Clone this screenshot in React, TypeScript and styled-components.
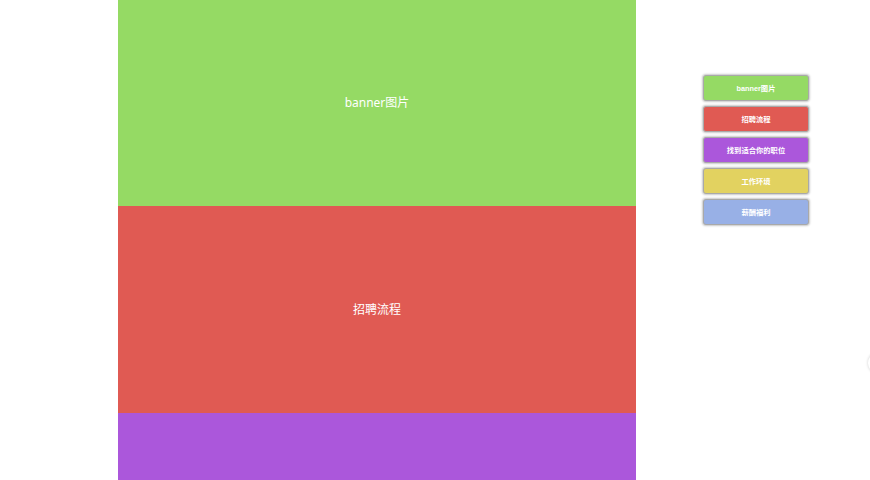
import React from "react";
import styled, { createGlobalStyle } from "styled-components";

const Global = createGlobalStyle`
  html, body { margin: 0; padding: 0; background: #fff; overflow: hidden; }
  body { font-family: "Noto Sans", "Noto Sans CJK SC", sans-serif; }
`;

const Page = styled.div`
  display: flex;
  align-items: flex-start;
  width: 870px;
  height: 480px;
  position: relative;
  overflow: hidden;
`;

const Column = styled.main`
  margin-left: 118px;
  width: 518px;
  display: flex;
  flex-direction: column;
`;

const Section = styled.section<{ $bg: string; $h: number }>`
  height: ${(p) => p.$h}px;
  box-sizing: border-box;
  padding-bottom: 2px;
  background: ${(p) => p.$bg};
  display: flex;
  align-items: center;
  justify-content: center;
  color: #fff;
  font-size: 12px;
  font-family: "Noto Sans", "Noto Sans CJK SC", sans-serif;
`;

const Nav = styled.nav`
  margin-left: 67px;
  margin-top: 75px;
  display: flex;
  flex-direction: column;
  gap: 5px;
`;

const NavButton = styled.button<{ $bg: string }>`
  width: 106px;
  height: 26px;
  background: ${(p) => p.$bg};
  border: 1px solid #a9a9a9;
  border-radius: 3px;
  box-shadow: 0 0 2px 1px rgba(0, 0, 0, 0.22);
  color: #fff;
  font-size: 7.3px;
  font-weight: bold;
  font-family: "Liberation Sans", "Noto Sans CJK SC", sans-serif;
  padding: 0;
  cursor: pointer;
`;

const EdgeKnob = styled.div`
  position: absolute;
  left: 868px;
  top: 352px;
  width: 22px;
  height: 22px;
  border-radius: 50%;
  background: #fff;
  box-shadow: 0 0 3px rgba(0, 0, 0, 0.2);
`;

const items = [
  { label: "banner图片", color: "#95da64" },
  { label: "招聘流程", color: "#e05a53" },
  { label: "找到适合你的职位", color: "#ab57db" },
  { label: "工作环境", color: "#e2d260" },
  { label: "薪酬福利", color: "#98b0e6" },
];

export default function App() {
  return (
    <>
      <Global />
      <Page>
        <Column>
          {items.map((it, i) => (
            <Section key={it.label} $bg={it.color} $h={i === 0 ? 206 : 207}>
              {it.label}
            </Section>
          ))}
        </Column>
        <Nav>
          {items.map((it) => (
            <NavButton key={it.label} $bg={it.color}>
              {it.label}
            </NavButton>
          ))}
        </Nav>
        <EdgeKnob />
      </Page>
    </>
  );
}
